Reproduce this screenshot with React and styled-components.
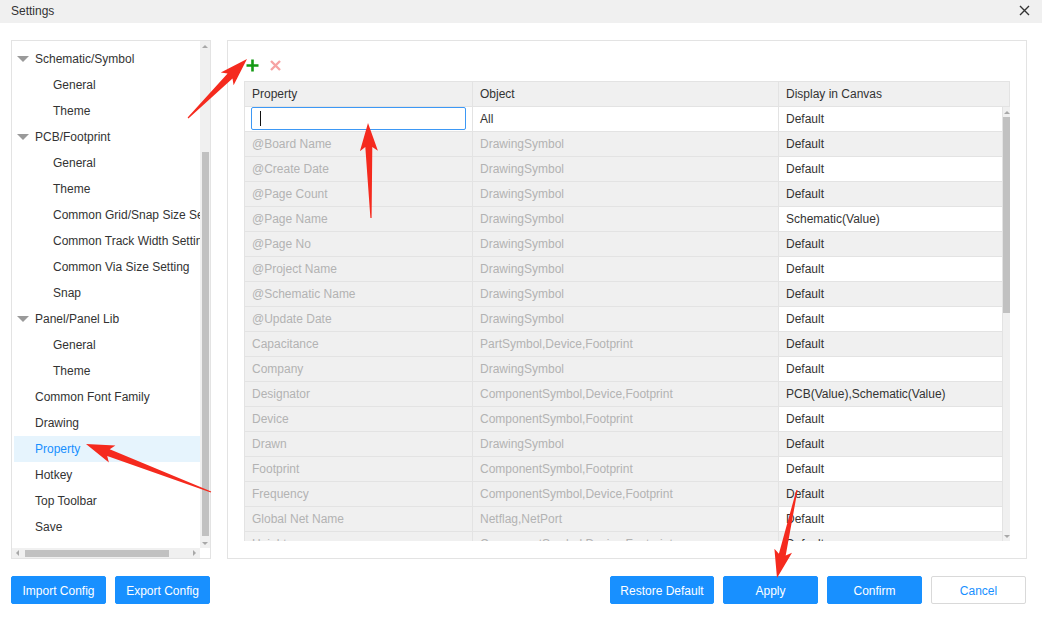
import React from "react";
import styled, { createGlobalStyle } from "styled-components";

const Global = createGlobalStyle`
  html, body { margin: 0; padding: 0; background: #fff; }
  body { font-family: "Liberation Sans", Arial, sans-serif; font-size: 12px; color: #333; }
  * { box-sizing: border-box; }
`;

const Window = styled.div`
  position: relative;
  width: 1042px;
  height: 618px;
  display: flex;
  flex-direction: column;
  background: #fff;
  overflow: hidden;
`;

const TitleBar = styled.div`
  height: 23px;
  flex: none;
  background: #f0f0f0;
  display: flex;
  align-items: center;
  justify-content: space-between;
  padding: 0 12px 2px 11px;
  color: #333;
  font-size: 12px;
`;

const CloseBtn = styled.div`
  width: 12px;
  height: 12px;
  display: flex;
  align-items: center;
  justify-content: center;
`;

const Body = styled.div`
  display: flex;
  gap: 16px;
  padding: 17px 15px 0 11px;
  height: 519px;
  flex: none;
  box-sizing: content-box;
`;

const LeftPanel = styled.div`
  width: 200px;
  height: 519px;
  border: 1px solid #e3e3e3;
  display: grid;
  grid-template-columns: 1fr 10px;
  grid-template-rows: 1fr 10px;
`;

const Tree = styled.div`
  overflow: hidden;
  padding: 5px 0 0 2px;
`;

const TreeRow = styled.div`
  height: 26px;
  display: flex;
  align-items: center;
  white-space: nowrap;
  padding-left: ${(p) => p.$indent}px;
  color: ${(p) => (p.$active ? "#1890ff" : "#333")};
  background: ${(p) => (p.$active ? "#e6f4fd" : "transparent")};
`;

const Caret = styled.span`
  width: 0;
  height: 0;
  border-left: 6px solid transparent;
  border-right: 6px solid transparent;
  border-top: 6px solid #9a9a9a;
  margin: 0 6px 0 3px;
  flex: none;
`;

const VTrack = styled.div`
  background: #f0f0f0;
  display: flex;
  flex-direction: column;
  align-items: center;
  padding: ${(p) => p.$pad};
`;

const Thumb = styled.div`
  background: #c1c1c1;
  width: 7px;
  flex: none;
`;

const HTrack = styled.div`
  background: #f0f0f0;
  display: flex;
  align-items: center;
  padding: 0 4px 0 4px;
`;

const HThumb = styled.div`
  background: #c1c1c1;
  height: 7px;
  flex: none;
`;

const ArrowUp = styled.span`
  width: 0;
  height: 0;
  border-left: 3px solid transparent;
  border-right: 3px solid transparent;
  border-bottom: 3px solid #a8a8a8;
  flex: none;
`;

const ArrowDown = styled(ArrowUp)`
  border-bottom: none;
  border-top: 3px solid #a8a8a8;
`;

const ArrowLeft = styled.span`
  width: 0;
  height: 0;
  border-top: 3px solid transparent;
  border-bottom: 3px solid transparent;
  border-right: 3px solid #a8a8a8;
  flex: none;
`;

const ArrowRight = styled(ArrowLeft)`
  border-right: none;
  border-left: 3px solid #a8a8a8;
`;

const Spacer = styled.div`
  height: ${(p) => p.$h || 0}px;
  width: ${(p) => p.$w || 0}px;
  flex: ${(p) => (p.$grow ? 1 : "none")};
`;

const Corner = styled.div`
  background: #fff;
`;

const RightPanel = styled.div`
  flex: 1;
  height: 519px;
  border: 1px solid #e3e3e3;
  padding: 12px 16px 17px 16px;
  display: flex;
  flex-direction: column;
`;

const Toolbar = styled.div`
  height: 24px;
  margin-bottom: 4px;
  display: flex;
  align-items: center;
  gap: 11px;
  padding-left: 2px;
`;

const Table = styled.div`
  height: 460px;
  display: flex;
  flex-direction: column;
  border-left: 1px solid #e3e3e3;
  border-top: 1px solid #e3e3e3;
`;

const HeaderRow = styled.div`
  height: 25px;
  display: grid;
  grid-template-columns: 228px 306px 1fr;
  background: #f0f0f0;
  border-bottom: 1px solid #e3e3e3;
  flex: none;
`;

const HeadCell = styled.div`
  display: flex;
  align-items: center;
  padding-left: 7px;
  border-right: 1px solid #e3e3e3;
  color: #333;
`;

const BodyWrap = styled.div`
  flex: 1;
  display: flex;
  min-height: 0;
`;

const Rows = styled.div`
  flex: 1;
  overflow: hidden;
`;

const Row = styled.div`
  height: 25px;
  display: grid;
  grid-template-columns: 228px 306px 1fr;
`;

const Cell = styled.div`
  display: flex;
  align-items: center;
  padding-left: 7px;
  white-space: nowrap;
  overflow: hidden;
  border-right: 1px solid #e3e3e3;
  border-bottom: 1px solid #e3e3e3;
  background: ${(p) => (p.$white ? "#fff" : "#f0f0f0")};
  color: ${(p) => (p.$muted ? "#b3b3b3" : "#333")};
`;

const EditCell = styled(Cell)`
  padding-left: 6px;
  padding-right: 6px;
  align-items: flex-start;
  padding-top: 0;
`;

const InputBox = styled.div`
  width: 215px;
  height: 23px;
  border: 1px solid #3d98f5;
  border-radius: 2px;
  background: #fff;
  display: flex;
  align-items: center;
  padding-left: 8px;
`;

const TextCaret = styled.span`
  width: 1px;
  height: 15px;
  background: #111;
`;

const Footer = styled.div`
  display: flex;
  align-items: center;
  justify-content: space-between;
  padding: 17px 16px 0 11px;
`;

const BtnGroup = styled.div`
  display: flex;
  gap: ${(p) => p.$gap}px;
`;

const Button = styled.div`
  height: 28px;
  width: ${(p) => p.$w || 95}px;
  border-radius: 2px;
  display: flex;
  align-items: center;
  justify-content: center;
  padding-top: 1px;
  font-size: 12px;
  background: ${(p) => (p.$plain ? "#fff" : "#1890ff")};
  color: ${(p) => (p.$plain ? "#1890ff" : "#fff")};
  border: 1px solid ${(p) => (p.$plain ? "#d9d9d9" : "#1890ff")};
`;

const Overlay = styled.svg`
  position: absolute;
  left: 0;
  top: 0;
  pointer-events: none;
`;

const tree = [
  { label: "Schematic/Symbol", group: true },
  { label: "General", child: true },
  { label: "Theme", child: true },
  { label: "PCB/Footprint", group: true },
  { label: "General", child: true },
  { label: "Theme", child: true },
  { label: "Common Grid/Snap Size Setting", child: true },
  { label: "Common Track Width Setting", child: true },
  { label: "Common Via Size Setting", child: true },
  { label: "Snap", child: true },
  { label: "Panel/Panel Lib", group: true },
  { label: "General", child: true },
  { label: "Theme", child: true },
  { label: "Common Font Family" },
  { label: "Drawing" },
  { label: "Property", active: true },
  { label: "Hotkey" },
  { label: "Top Toolbar" },
  { label: "Save" },
];

const rows = [
  ["@Board Name", "DrawingSymbol", "Default"],
  ["@Create Date", "DrawingSymbol", "Default"],
  ["@Page Count", "DrawingSymbol", "Default"],
  ["@Page Name", "DrawingSymbol", "Schematic(Value)"],
  ["@Page No", "DrawingSymbol", "Default"],
  ["@Project Name", "DrawingSymbol", "Default"],
  ["@Schematic Name", "DrawingSymbol", "Default"],
  ["@Update Date", "DrawingSymbol", "Default"],
  ["Capacitance", "PartSymbol,Device,Footprint", "Default"],
  ["Company", "DrawingSymbol", "Default"],
  ["Designator", "ComponentSymbol,Device,Footprint", "PCB(Value),Schematic(Value)"],
  ["Device", "ComponentSymbol,Footprint", "Default"],
  ["Drawn", "DrawingSymbol", "Default"],
  ["Footprint", "ComponentSymbol,Footprint", "Default"],
  ["Frequency", "ComponentSymbol,Device,Footprint", "Default"],
  ["Global Net Name", "Netflag,NetPort", "Default"],
  ["Height", "ComponentSymbol,Device,Footprint", "Default"],
];

function arrowPoints(tail, tip) {
  const dx = tip[0] - tail[0];
  const dy = tip[1] - tail[1];
  const len = Math.hypot(dx, dy);
  const ux = dx / len, uy = dy / len;
  const nx = -uy, ny = ux;
  const headLen = 24, headW = 9, neckW = 3.5, tailW = 0.6;
  const neck = [tip[0] - ux * headLen, tip[1] - uy * headLen];
  const barb = [tip[0] - ux * (headLen + 4), tip[1] - uy * (headLen + 4)];
  const p = (b, s) => `${(b[0] + nx * s).toFixed(1)},${(b[1] + ny * s).toFixed(1)}`;
  return [
    p(tail, tailW),
    p(neck, neckW),
    p(barb, headW),
    `${tip[0]},${tip[1]}`,
    p(barb, -headW),
    p(neck, -neckW),
    p(tail, -tailW),
  ].join(" ");
}

const arrows = [
  [[188, 118], [247, 59]],
  [[371, 218], [368, 123]],
  [[211, 492], [86, 444]],
  [[797, 490], [777, 578]],
];

export default function App() {
  return (
    <>
      <Global />
      <Window>
        <TitleBar>
          <span>Settings</span>
          <CloseBtn>
            <svg width="11" height="11" viewBox="0 0 11 11">
              <path d="M1 1 L10 10 M10 1 L1 10" stroke="#333" strokeWidth="1.4" />
            </svg>
          </CloseBtn>
        </TitleBar>
        <Body>
          <LeftPanel>
            <Tree>
              {tree.map((t, i) => (
                <TreeRow
                  key={i}
                  $indent={t.group ? 0 : t.child ? 39 : 21}
                  $active={t.active}
                >
                  {t.group && <Caret />}
                  {t.label}
                </TreeRow>
              ))}
            </Tree>
            <VTrack $pad="4px 0 3px 0">
              <ArrowUp />
              <Spacer $h={104} />
              <Thumb style={{ height: 384 }} />
              <Spacer $grow />
              <ArrowDown />
            </VTrack>
            <HTrack>
              <ArrowLeft />
              <Spacer $w={6} />
              <HThumb style={{ width: 144 }} />
              <Spacer $grow />
              <ArrowRight />
            </HTrack>
            <Corner />
          </LeftPanel>
          <RightPanel>
            <Toolbar>
              <svg width="13" height="13" viewBox="0 0 13 13">
                <path d="M6.5 0.5 V12.5 M0.5 6.5 H12.5" stroke="#159a15" strokeWidth="2.6" />
              </svg>
              <svg width="11" height="11" viewBox="0 0 11 11">
                <path d="M1 1 L10 10 M10 1 L1 10" stroke="#f6a3a3" strokeWidth="2.4" />
              </svg>
            </Toolbar>
            <Table>
              <HeaderRow>
                <HeadCell>Property</HeadCell>
                <HeadCell>Object</HeadCell>
                <HeadCell>Display in Canvas</HeadCell>
              </HeaderRow>
              <BodyWrap>
                <Rows>
                  <Row>
                    <EditCell $white>
                      <InputBox>
                        <TextCaret />
                      </InputBox>
                    </EditCell>
                    <Cell $white>All</Cell>
                    <Cell $white>Default</Cell>
                  </Row>
                  {rows.map((r, i) => (
                    <Row key={i}>
                      <Cell $muted>{r[0]}</Cell>
                      <Cell $muted>{r[1]}</Cell>
                      <Cell $white={i % 2 === 1}>{r[2]}</Cell>
                    </Row>
                  ))}
                </Rows>
                <VTrack $pad="4px 0 3px 0">
                  <ArrowUp />
                  <Spacer $h={3} />
                  <Thumb style={{ height: 196 }} />
                  <Spacer $grow />
                  <ArrowDown />
                </VTrack>
              </BodyWrap>
            </Table>
          </RightPanel>
        </Body>
        <Footer>
          <BtnGroup $gap={9}>
            <Button>Import Config</Button>
            <Button>Export Config</Button>
          </BtnGroup>
          <BtnGroup $gap={9}>
            <Button $w={104}>Restore Default</Button>
            <Button>Apply</Button>
            <Button>Confirm</Button>
            <Button $plain>Cancel</Button>
          </BtnGroup>
        </Footer>
        <Overlay width="1042" height="618" viewBox="0 0 1042 618">
          {arrows.map((a, i) => (
            <polygon key={i} points={arrowPoints(a[0], a[1])} fill="#f52a1e" />
          ))}
        </Overlay>
      </Window>
    </>
  );
}
